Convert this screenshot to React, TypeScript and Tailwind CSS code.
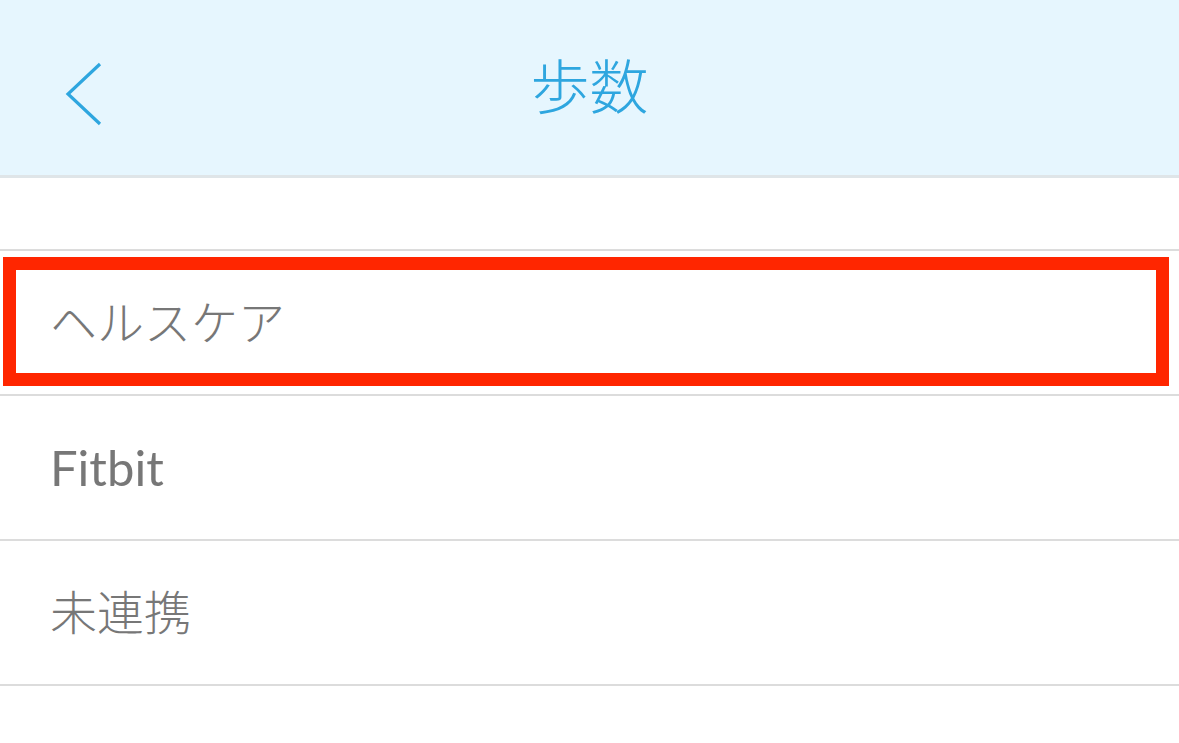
const FONT = "font-['Lato','Noto_Sans_CJK_JP',sans-serif]";

const ROWS = [
  { label: 'ヘルスケア', highlighted: true, latin: false },
  { label: 'Fitbit', highlighted: false, latin: true },
  { label: '未連携', highlighted: false, latin: false },
];

export default function App() {
  return (
    <div className={`w-[1179px] h-[743px] bg-white overflow-hidden ${FONT}`}>
      {/* Header */}
      <div className="relative h-[178px] bg-[#e6f6fe] border-b-[3px] border-[#dfe5e8] flex items-center justify-center">
        <svg
          className="absolute left-[62px] top-[61px]"
          width="42"
          height="66"
          viewBox="0 0 42 66"
          fill="none"
        >
          <path d="M38 3 L6 33 L38 63" stroke="#2ea6df" strokeWidth="3.2" />
        </svg>
        <h1 className="text-[59px] leading-none font-light text-[#2ea6df] -mt-[2px]">歩数</h1>
      </div>

      {/* Spacer */}
      <div className="h-[73px] border-b-[2px] border-[#dcdcdc]" />

      {/* Rows */}
      {ROWS.map((row) => (
        <div
          key={row.label}
          className="relative h-[145px] border-b-[2px] border-[#dcdcdc] flex items-center pl-[50px]"
        >
          <span
            className={`leading-none text-[#777777] ${row.latin ? 'text-[49px] font-normal' : 'text-[47px] font-light'}`}
          >
            {row.label}
          </span>
          {row.highlighted && (
            <div className="absolute left-[3px] right-[10px] top-[6px] bottom-[8px] border-[13px] border-[#ff2600]" />
          )}
        </div>
      ))}
    </div>
  );
}
